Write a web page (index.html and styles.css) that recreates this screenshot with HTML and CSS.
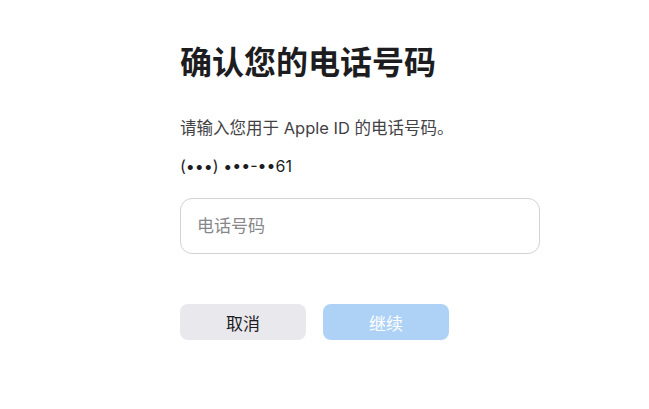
FILE: index.html
```html
<!DOCTYPE html>
<html lang="zh-CN">
<head>
<meta charset="utf-8">
<title>确认您的电话号码</title>
<link rel="stylesheet" href="styles.css">
</head>
<body>
<main class="panel">
  <h1 class="title">确认您的电话号码</h1>
  <p class="desc">请输入您用于 Apple ID 的电话号码。</p>
  <p class="phone">(•••) •••-••61</p>
  <div class="field">
    <input class="field-input" type="tel" placeholder="电话号码">
  </div>
  <div class="actions">
    <button class="btn btn-cancel" type="button">取消</button>
    <button class="btn btn-continue" type="button" disabled>继续</button>
  </div>
</main>
</body>
</html>
```
FILE: styles.css
```css
html, body {
  margin: 0;
  padding: 0;
  background: #ffffff;
}

body {
  font-family: "Inter", "Noto Sans CJK SC", sans-serif;
  color: #1d1d1f;
}

.panel {
  width: 360px;
  padding: 43px 0 0 180px;
  display: flex;
  flex-direction: column;
}

.title {
  margin: 0;
  font-size: 32px;
  line-height: 40px;
  font-weight: 700;
  color: #1d1d1f;
  letter-spacing: 0;
}

.desc {
  margin: 33px 0 0;
  font-size: 16.5px;
  line-height: 24px;
  color: #424245;
}

.phone {
  margin: 14px 0 0;
  font-size: 16px;
  line-height: 24px;
  color: #1d1d1f;
}

.field {
  margin-top: 20px;
}

.field-input {
  box-sizing: border-box;
  width: 360px;
  height: 56px;
  border: 1px solid #d2d2d7;
  border-radius: 12px;
  padding: 0 16px;
  font-family: inherit;
  font-size: 17px;
  color: #1d1d1f;
  background: #ffffff;
  outline: none;
}

.field-input::placeholder {
  color: #86868b;
}

.actions {
  margin-top: 50px;
  display: flex;
  gap: 17px;
}

.btn {
  width: 126px;
  height: 36px;
  border: 0;
  border-radius: 8px;
  font-family: inherit;
  font-size: 17px;
  padding: 0;
}

.btn-cancel {
  background: #e8e8ed;
  color: #1d1d1f;
}

.btn-continue {
  background: #add2f6;
  color: #ffffff;
}
```
